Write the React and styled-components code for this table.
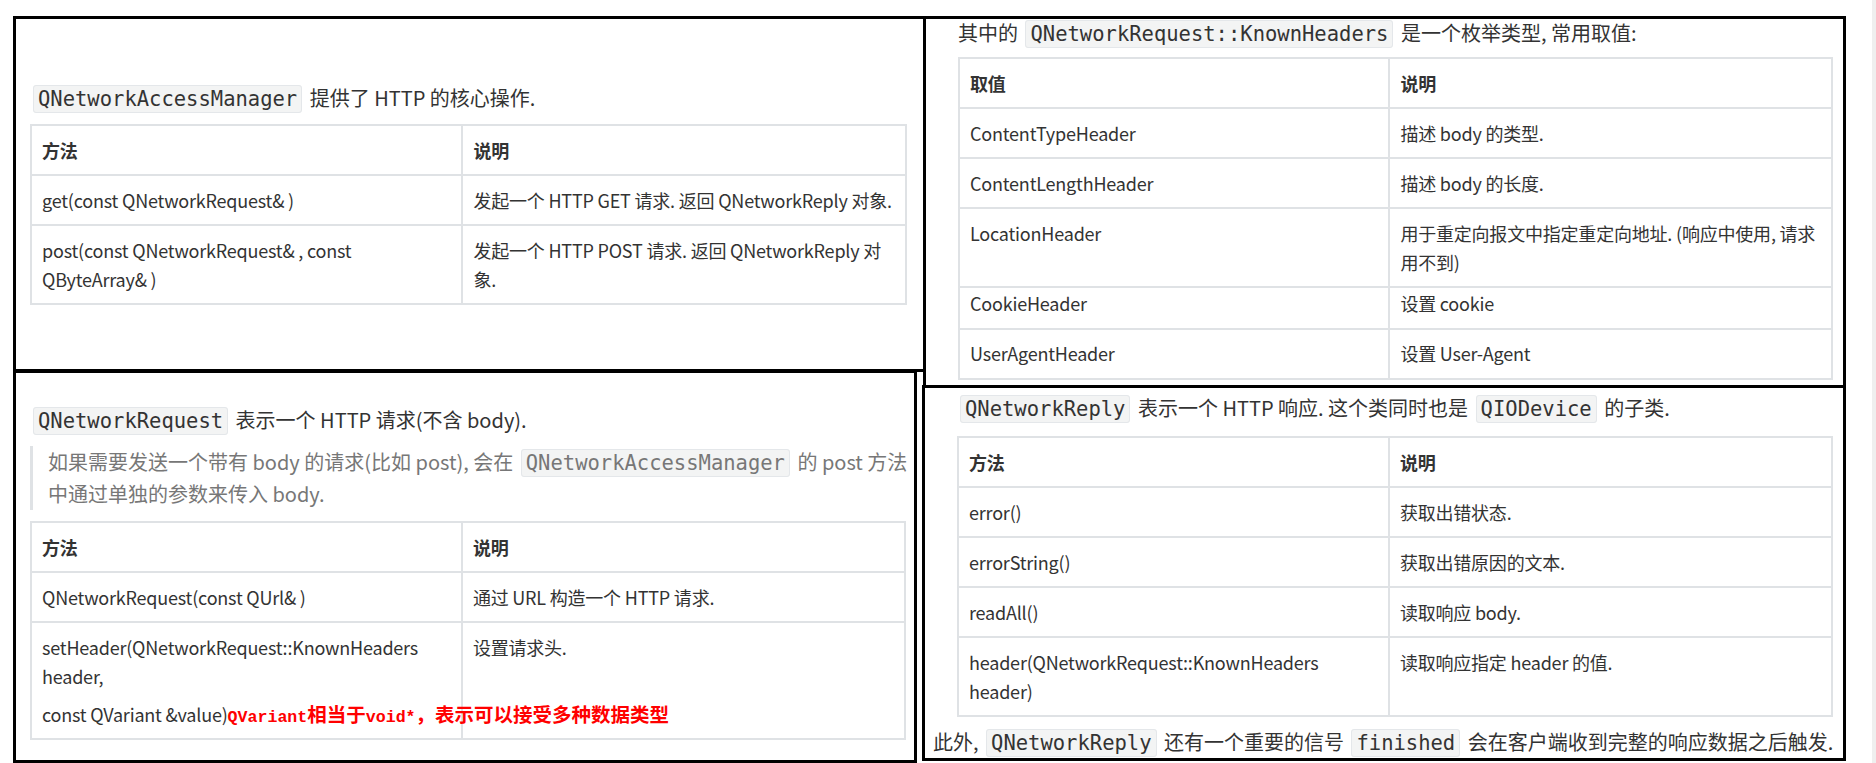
import styled, { createGlobalStyle } from "styled-components";

const GlobalStyle = createGlobalStyle`
  html, body {
    margin: 0;
    padding: 0;
    background: #fff;
  }
  body {
    font-family: "Noto Sans CJK SC", sans-serif;
    color: #333;
  }
`;

const Shell = styled.div`
  display: flex;
  width: 1876px;
  height: 763px;
  overflow: hidden;
  background: #fff;
`;

const Canvas = styled.div`
  flex: 1;
  display: flex;
  align-items: flex-start;
  padding: 16px 0 0 13px;
`;

const ScrollTrack = styled.div`
  width: 4px;
  background: #efefef;
`;

const Column = styled.div`
  display: flex;
  flex-direction: column;
  margin-left: ${(p) => p.$shift || 0}px;
`;

const Panel = styled.section`
  box-sizing: border-box;
  width: ${(p) => p.$w}px;
  height: ${(p) => p.$h}px;
  margin-top: ${(p) => p.$mt || 0}px;
  margin-left: ${(p) => p.$ml || 0}px;
  padding: ${(p) => p.$pad};
  border: 3px solid #000;
  background: #fff;
  overflow: hidden;
  font-size: 20px;
`;

const Para = styled.p`
  margin: ${(p) => p.$mt || 0}px 0 0 ${(p) => p.$indent || 0}px;
  line-height: ${(p) => p.$lh || 32}px;
  white-space: nowrap;
`;

const Code = styled.code`
  font-family: "DejaVu Sans Mono", "Liberation Mono", monospace;
  font-size: 20.5px;
  line-height: 1;
  letter-spacing: 0;
  background: #f3f4f4;
  border: 1px solid #e4e7ea;
  border-radius: 3px;
  padding: 1px 4px;
  margin: 0 3px;
  color: inherit;
`;

const Quote = styled.blockquote`
  margin: 10px 0 0;
  padding: 0 0 0 15px;
  border-left: 3px solid #dfe2e5;
  color: #777;
  line-height: 32px;
  white-space: nowrap;
`;

const Table = styled.table`
  width: 100%;
  border-collapse: collapse;
  table-layout: fixed;
  font-size: 18px;
  letter-spacing: -0.2px;
  margin-top: ${(p) => p.$mt || 10}px;
`;

const Col = styled.col`
  width: ${(p) => p.$w};
`;

const HeadCell = styled.th`
  text-align: left;
  font-weight: 700;
  border: 2px solid #dfe2e5;
  padding: 9.5px 10px;
  line-height: 29px;
  vertical-align: top;
`;

const Cell = styled.td`
  border: 2px solid #dfe2e5;
  padding: ${(p) => (p.$tight ? "1px 10px 9.5px" : "9.5px 10px")};
  line-height: 29px;
  vertical-align: top;
  white-space: nowrap;
  overflow: visible;
`;

const CellLine = styled.div`
  margin-top: 9px;
`;

/* red remark: CJK at full size, latin at half width like a song-style font */
const Note = styled.span`
  color: #f00;
  font-family: "Noto Sans CJK SC", sans-serif;
  font-weight: 700;
  font-size: 19.5px;
  letter-spacing: 0;
  line-height: 1;
`;

const NoteLatin = styled.span`
  font-family: "Liberation Mono", monospace;
  font-size: 16.6px;
`;

function DataTable({ head, rows, mt }) {
  return (
    <Table $mt={mt}>
      <colgroup>
        <Col $w="49.3%" />
        <Col $w="50.7%" />
      </colgroup>
      <thead>
        <tr>
          <HeadCell>{head[0]}</HeadCell>
          <HeadCell>{head[1]}</HeadCell>
        </tr>
      </thead>
      <tbody>
        {rows.map((r, i) => (
          <tr key={i}>
            <Cell $tight={r.tight}>{r.a}</Cell>
            <Cell $tight={r.tight}>{r.b}</Cell>
          </tr>
        ))}
      </tbody>
    </Table>
  );
}

const managerRows = [
  { a: "get(const QNetworkRequest& )", b: "发起一个 HTTP GET 请求. 返回 QNetworkReply 对象." },
  {
    a: (
      <>
        post(const QNetworkRequest& , const
        <br />
        QByteArray& )
      </>
    ),
    b: (
      <>
        发起一个 HTTP POST 请求. 返回 QNetworkReply 对
        <br />
        象.
      </>
    ),
  },
];

const headerRows = [
  { a: "ContentTypeHeader", b: "描述 body 的类型." },
  { a: "ContentLengthHeader", b: "描述 body 的长度." },
  {
    a: "LocationHeader",
    b: (
      <>
        用于重定向报文中指定重定向地址. (响应中使用, 请求
        <br />
        用不到)
      </>
    ),
  },
  { a: "CookieHeader", b: "设置 cookie", tight: true },
  { a: "UserAgentHeader", b: "设置 User-Agent" },
];

const requestRows = [
  { a: "QNetworkRequest(const QUrl& )", b: "通过 URL 构造一个 HTTP 请求." },
  {
    a: (
      <>
        setHeader(QNetworkRequest::KnownHeaders
        <br />
        header,
        <CellLine>
          const QVariant &amp;value)
          <Note>
            <NoteLatin>QVariant</NoteLatin>相当于<NoteLatin>void*</NoteLatin>
            ，表示可以接受多种数据类型
          </Note>
        </CellLine>
      </>
    ),
    b: "设置请求头.",
  },
];

const replyRows = [
  { a: "error()", b: "获取出错状态." },
  { a: "errorString()", b: "获取出错原因的文本." },
  { a: "readAll()", b: "读取响应 body." },
  {
    a: (
      <>
        header(QNetworkRequest::KnownHeaders
        <br />
        header)
      </>
    ),
    b: "读取响应指定 header 的值.",
  },
];

export default function App() {
  return (
    <>
      <GlobalStyle />
      <Shell>
        <Canvas>
          <Column>
            <Panel $w={913} $h={356} $pad="63px 16px 0 14px">
              <Para>
                <Code>QNetworkAccessManager</Code> 提供了 HTTP 的核心操作.
              </Para>
              <DataTable head={["方法", "说明"]} rows={managerRows} />
            </Panel>
            <Panel $w={904} $h={393} $mt={-2} $pad="31px 8px 0 14px">
              <Para>
                <Code>QNetworkRequest</Code> 表示一个 HTTP 请求(不含 body).
              </Para>
              <Quote>
                如果需要发送一个带有 body 的请求(比如 post), 会在{" "}
                <Code>QNetworkAccessManager</Code> 的 post 方法
                <br />
                中通过单独的参数来传入 body.
              </Quote>
              <DataTable head={["方法", "说明"]} rows={requestRows} mt={11} />
            </Panel>
          </Column>
          <Column $shift={-3}>
            <Panel $w={923} $h={372} $pad="0 10px 0 32px">
              <Para $lh={28}>
                其中的 <Code>QNetworkRequest::KnownHeaders</Code> 是一个枚举类型, 常用取值:
              </Para>
              <DataTable head={["取值", "说明"]} rows={headerRows} />
            </Panel>
            <Panel $w={924} $h={376} $mt={-3} $ml={-1} $pad="6px 10px 0 32px">
              <Para $lh={28}>
                <Code>QNetworkReply</Code> 表示一个 HTTP 响应. 这个类同时也是{" "}
                <Code>QIODevice</Code> 的子类.
              </Para>
              <DataTable head={["方法", "说明"]} rows={replyRows} mt={14} />
              <Para $lh={28} $indent={-24} $mt={11}>
                此外, <Code>QNetworkReply</Code> 还有一个重要的信号 <Code>finished</Code>{" "}
                会在客户端收到完整的响应数据之后触发.
              </Para>
            </Panel>
          </Column>
        </Canvas>
        <ScrollTrack />
      </Shell>
    </>
  );
}
